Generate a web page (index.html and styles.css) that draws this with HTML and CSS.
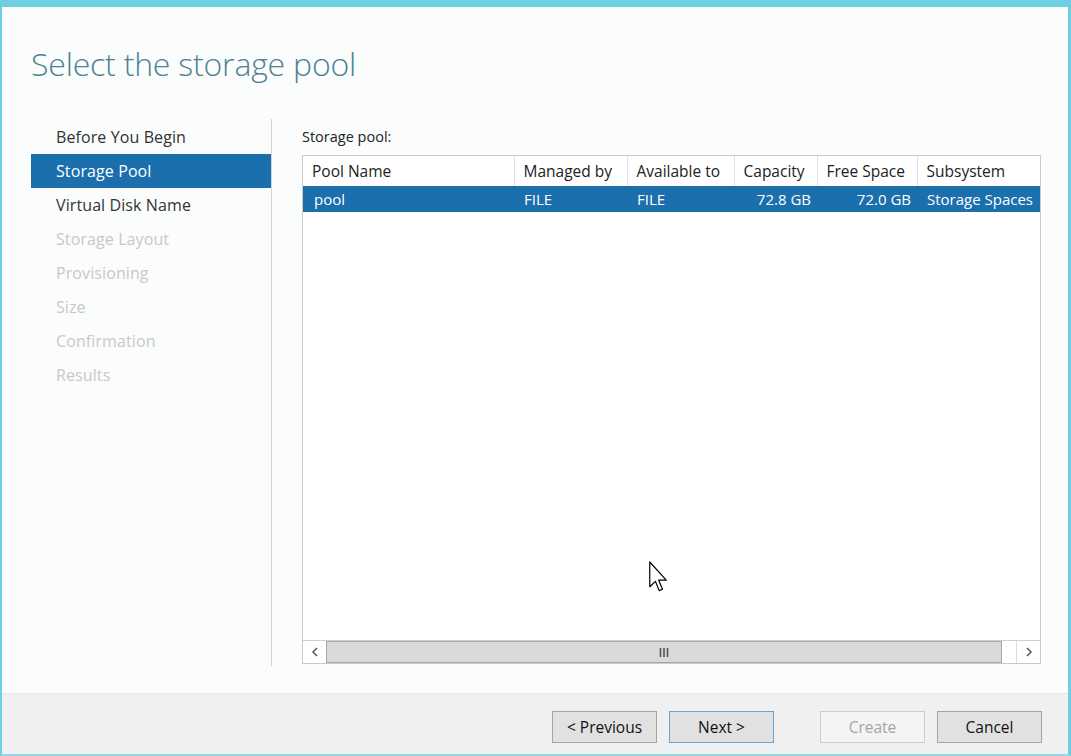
FILE: index.html
```html
<!DOCTYPE html>
<html>
<head>
<meta charset="utf-8">
<link rel="stylesheet" href="styles.css">
</head>
<body>
<div class="window">
  <div class="main">
    <div class="header">
      <h1 class="title">Select the storage pool</h1>
    </div>
    <div class="content">
      <ul class="nav">
        <li class="nav-item">Before You Begin</li>
        <li class="nav-item active">Storage Pool</li>
        <li class="nav-item">Virtual Disk Name</li>
        <li class="nav-item disabled">Storage Layout</li>
        <li class="nav-item disabled">Provisioning</li>
        <li class="nav-item disabled">Size</li>
        <li class="nav-item disabled">Confirmation</li>
        <li class="nav-item disabled">Results</li>
      </ul>
      <div class="panel">
        <div class="label">Storage pool:</div>
        <div class="listview">
          <div class="list-body">
            <table class="grid">
              <colgroup>
                <col class="c1"><col class="c2"><col class="c3"><col class="c4"><col class="c5"><col class="c6">
              </colgroup>
              <thead>
                <tr>
                  <th>Pool Name</th>
                  <th>Managed by</th>
                  <th>Available to</th>
                  <th>Capacity</th>
                  <th>Free Space</th>
                  <th>Subsystem</th>
                </tr>
              </thead>
              <tbody>
                <tr class="selected">
                  <td class="first">pool</td>
                  <td>FILE</td>
                  <td>FILE</td>
                  <td class="num">72.8 GB</td>
                  <td class="num">72.0 GB</td>
                  <td class="nowrap">Storage Spaces</td>
                </tr>
              </tbody>
            </table>
          </div>
          <div class="hscroll">
            <div class="sb-btn sb-left">
              <svg width="8" height="10" viewBox="0 0 8 10"><path d="M6 1 L2 5 L6 9" fill="none" stroke="#555" stroke-width="1.5"/></svg>
            </div>
            <div class="sb-thumb">
              <svg width="10" height="9" viewBox="0 0 10 9"><path d="M1.5 0 V9 M5 0 V9 M8.5 0 V9" stroke="#555" stroke-width="1.6"/></svg>
            </div>
            <div class="sb-rest"></div>
            <div class="sb-btn sb-right">
              <svg width="8" height="10" viewBox="0 0 8 10"><path d="M2 1 L6 5 L2 9" fill="none" stroke="#555" stroke-width="1.5"/></svg>
            </div>
          </div>
        </div>
      </div>
    </div>
  </div>
  <div class="footer">
    <button class="btn">&lt; Previous</button>
    <button class="btn focused">Next &gt;</button>
    <button class="btn disabled-btn">Create</button>
    <button class="btn">Cancel</button>
  </div>
  <svg class="cursor" width="18" height="32" viewBox="0 0 12 21">
    <path d="M0.5 0.5 L0.5 17 L4.3 13.4 L6.8 19.6 L9 18.7 L6.5 12.6 L11.5 12.6 Z" fill="#fff" stroke="#000" stroke-width="0.8" stroke-linejoin="round"/>
  </svg>
</div>
</body>
</html>
```
FILE: styles.css
```css
* { box-sizing: border-box; }
html, body { margin: 0; padding: 0; }
body {
  width: 1071px;
  height: 756px;
  overflow: hidden;
  font-family: "Open Sans", "Noto Sans", sans-serif;
  background: #6ccfe2;
}
.window {
  position: relative;
  width: 1071px;
  height: 756px;
  border-top: 7px solid #6ccfe2;
  border-left: 2px solid #6ccfe2;
  border-right: 3px solid #6ccfe2;
  border-bottom: 2px solid #8fdbe9;
  background: #fbfcfc;
  display: flex;
  flex-direction: column;
}
.main {
  height: 686px;
  display: flex;
  flex-direction: column;
}
.header {
  height: 112px;
  padding-left: 29px;
  padding-top: 37px;
}
.title {
  margin: 0;
  font-weight: 300;
  font-size: 32px;
  line-height: 40px;
  color: #4b8294;
  letter-spacing: -0.2px;
}
.content {
  display: flex;
  padding-left: 29px;
  height: 547px;
}
.nav {
  list-style: none;
  margin: 0;
  padding: 1px 0 0 0;
  width: 241px;
  border-right: 1px solid #d2d2d2;
  height: 547px;
}
.nav-item {
  height: 34px;
  line-height: 34px;
  padding-left: 25px;
  font-size: 16px;
  letter-spacing: 0.1px;
  color: #333;
  width: 240px;
}
.nav-item.active {
  background: #1b6fad;
  color: #fff;
}
.nav-item.disabled { color: #c8c8c8; }
.panel {
  margin-left: 30px;
  width: 739px;
  display: flex;
  flex-direction: column;
}
.label {
  height: 36px;
  line-height: 34px;
  font-size: 14.5px;
  color: #222;
  padding-top: 1px;
}
.listview {
  border: 1px solid #c9c9c9;
  height: 509px;
  background: #fff;
  display: flex;
  flex-direction: column;
  overflow: hidden;
}
.list-body {
  flex: 1;
  overflow: hidden;
}
.grid {
  border-collapse: collapse;
  table-layout: fixed;
  width: 775px;
  font-size: 15.5px;
}
.c1 { width: 211px; }
.c2 { width: 113px; }
.c3 { width: 107px; }
.c4 { width: 83px; }
.c5 { width: 100px; }
.c6 { width: 161px; }
.grid th {
  height: 30px;
  font-weight: 400;
  text-align: left;
  padding: 0 0 0 9px;
  color: #222;
  border-right: 1px solid #e2e2e2;
  white-space: nowrap;
  overflow: hidden;
}
.grid td {
  height: 26px;
  padding: 0 0 0 10px;
  font-weight: 500;
  font-size: 15px;
  white-space: nowrap;
  overflow: hidden;
}
.grid td.first { padding-left: 11px; }
.grid td.num { text-align: right; padding-right: 6px; }
.selected { background: #1b6fad; color: #fff; }
.hscroll {
  height: 23px;
  display: flex;
  border-top: 1px solid #cfcfcf;
  background: #fff;
}
.sb-btn {
  width: 23px;
  display: flex;
  align-items: center;
  justify-content: center;
  background: #fff;
}
.sb-left { width: 23px; }
.sb-right { border-left: 1px solid #dcdcdc; width: 24px; }
.sb-thumb {
  width: 676px;
  background: #dadada;
  border: 1px solid #a9a9a9;
  display: flex;
  align-items: center;
  justify-content: center;
}
.sb-rest { flex: 1; background: #fff; }
.footer {
  flex: 1;
  background: #f0f0f0;
  border-top: 1px solid #e6e6e6;
  display: flex;
  align-items: flex-start;
  padding-top: 17px;
  padding-left: 550px;
}
.btn {
  width: 105px;
  height: 32px;
  background: #e1e1e1;
  border: 1px solid #a5a5a5;
  font-family: "Open Sans", "Noto Sans", sans-serif;
  font-size: 15.5px;
  color: #111;
  padding: 0;
  margin-right: 12px;
}
.btn.focused { border-color: #6aa3d6; margin-right: 46px; }
.btn.disabled-btn {
  background: #f4f4f4;
  border-color: #cccccc;
  color: #a5a5a5;
  margin-right: 12px;
}
.cursor {
  position: absolute;
  left: 647px;
  top: 554px;
}
```
